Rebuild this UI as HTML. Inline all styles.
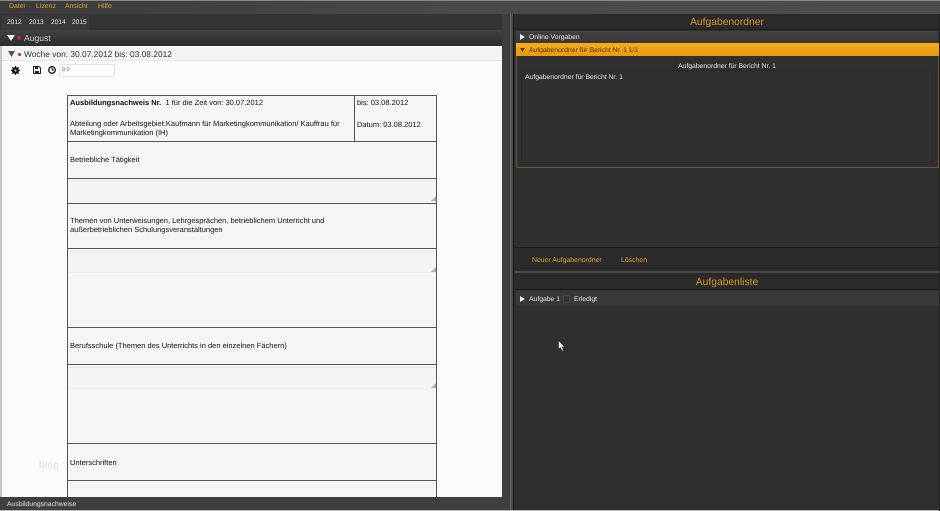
<!DOCTYPE html>
<html><head><meta charset="utf-8">
<style>
html,body{margin:0;padding:0;background:#2e2e2e;}
#p{position:relative;width:940px;height:511px;overflow:hidden;background:#2e2e2e;font-family:"Liberation Sans",sans-serif;font-size:7.5px;color:#111;text-rendering:geometricPrecision;filter:blur(.3px);}
#p div{position:absolute;box-sizing:border-box;}
.t{white-space:nowrap;line-height:11px;}
.o{color:#e0a030;font-size:6.9px;}
.w{color:#e2e2e2;font-size:6.8px;}
.h{height:1px;background:#555;left:67px;width:370px;}
.ta{left:69px;width:366px;background:#f4f4f4;border-top:1px solid #e8e8e8;border-bottom:1px solid #ececec;}
</style></head><body>
<div id="p">
<div style="left:0;top:0;width:940px;height:14px;background:linear-gradient(90deg,#3a3a3a,#4a4a4a 50%,#4c4c4c)"></div>
<div style="left:0;top:0;width:940px;height:1px;background:#888"></div>
<div class="t o" style="left:9px;top:.5px;">Datei</div>
<div class="t o" style="left:36px;top:.5px;">Lizenz</div>
<div class="t o" style="left:65px;top:.5px;">Ansicht</div>
<div class="t o" style="left:98px;top:.5px;">Hilfe</div>

<div style="left:0;top:14px;width:503px;height:16px;background:#343434"></div>
<div style="left:2px;top:15px;width:87px;height:15px;background:#3a3a3a"></div>
<div class="t w" style="left:7px;top:17px;font-size:6.6px;">2012</div>
<div class="t w" style="left:29px;top:17px;font-size:6.6px;">2013</div>
<div class="t w" style="left:51px;top:17px;font-size:6.6px;">2014</div>
<div class="t w" style="left:72px;top:17px;font-size:6.6px;">2015</div>

<div style="left:0;top:30px;width:503px;height:16px;background:linear-gradient(#424242,#2b2b2b)"></div>
<svg style="position:absolute;left:7px;top:35px" width="8" height="7"><path d="M0 0H8L4 6Z" fill="#eee"/></svg>
<div style="left:17px;top:36px;width:4px;height:4px;border-radius:50%;background:#c0282c"></div>
<div class="t" style="left:24px;top:33px;color:#ccc;font-size:8.6px;">August</div>

<div style="left:0;top:46px;width:2px;height:451px;background:#c8c8c8"></div>
<div style="left:2px;top:46px;width:500px;height:451px;background:#fbfbfb"></div>
<div style="left:2px;top:47px;width:500px;height:14px;background:#f3f3f3;border-bottom:1px solid #e6e6e6"></div>
<svg style="position:absolute;left:8px;top:51px" width="7" height="6"><path d="M0 0H7L3.5 6Z" fill="#555"/></svg>
<div style="left:18px;top:53px;width:3px;height:3px;border-radius:50%;background:#b02a30"></div>
<div class="t" style="left:24px;top:49px;font-size:8.4px;color:#333;">Woche von: 30.07.2012 bis: 03.08.2012</div>

<svg style="position:absolute;left:11px;top:66px" width="9" height="9" viewBox="0 0 9 9"><circle cx="4.5" cy="4.5" r="2.4" fill="none" stroke="#111" stroke-width="2"/><path d="M4.5 0V9M0 4.5H9M1.3 1.3L7.7 7.7M7.7 1.3L1.3 7.7" stroke="#111" stroke-width="1.2"/><circle cx="4.5" cy="4.5" r="1" fill="#fff"/></svg>
<svg style="position:absolute;left:33px;top:66px" width="8" height="8" viewBox="0 0 8 8"><path d="M.5.5H6L7.5 2V7.5H.5Z" fill="none" stroke="#222"/><path d="M2 1H5V3H2ZM2 5H6V7H2Z" fill="#222"/></svg>
<svg style="position:absolute;left:48px;top:66px" width="8" height="8" viewBox="0 0 8 8"><circle cx="4" cy="4" r="3.3" fill="none" stroke="#111" stroke-width="1.3"/><path d="M4 2V4H6" fill="none" stroke="#111" stroke-width=".9"/></svg>
<div style="left:59px;top:64px;width:56px;height:13px;border:1px solid #e4e4e4;border-radius:2px;background:#fbfbfb"></div>
<div class="t" style="left:62px;top:65px;font-size:5.5px;color:#777;">0.0</div>

<!-- form -->
<div style="left:67px;top:95px;width:370px;height:402px;background:#f5f5f5;border-left:1px solid #555;border-right:1px solid #555;"></div>
<div class="ta" style="top:180px;height:23px;border-bottom:none"></div>
<div class="ta" style="top:251px;height:22px;"></div>
<div class="ta" style="top:367px;height:22px;"></div>
<div class="h" style="top:95px"></div>
<div class="h" style="top:141px"></div>
<div class="h" style="top:178px"></div>
<div class="h" style="top:203px"></div>
<div class="h" style="top:248px"></div>
<div class="h" style="top:327px"></div>
<div class="h" style="top:364px"></div>
<div class="h" style="top:443px"></div>
<div class="h" style="top:480px"></div>
<div style="left:354px;top:95px;width:1px;height:46px;background:#555"></div>

<div class="t" style="left:70px;top:96.5px;"><b>Ausbildungsnachweis Nr.</b>&nbsp; 1 für die Zeit von: 30.07.2012</div>
<div class="t" style="left:357px;top:96.5px;">bis: 03.08.2012</div>
<div class="t" style="left:70px;top:120px;line-height:8.5px;">Abteilung oder Arbeitsgebiet:Kaufmann für Marketingkommunikation/ Kauffrau für<br>Marketingkommunikation (IH)</div>
<div class="t" style="left:357px;top:119px;">Datum: 03.08.2012</div>
<div class="t" style="left:70px;top:154px;">Betriebliche Tätigkeit</div>
<div class="t" style="left:70px;top:217px;line-height:8.5px;">Themen von Unterweisungen, Lehrgesprächen, betrieblichem Unterricht und<br>außerbetrieblichen Schulungsveranstaltungen</div>
<div class="t" style="left:70px;top:340px;">Berufsschule (Themen des Unterrichts in den einzelnen Fächern)</div>
<div class="t" style="left:70px;top:457px;">Unterschriften</div>

<svg style="position:absolute;left:431px;top:196px" width="5" height="5"><path d="M5 0V5H0Z" fill="#b0b0b0"/></svg>
<svg style="position:absolute;left:431px;top:267px" width="5" height="5"><path d="M5 0V5H0Z" fill="#b0b0b0"/></svg>
<svg style="position:absolute;left:431px;top:383px" width="5" height="5"><path d="M5 0V5H0Z" fill="#b0b0b0"/></svg>

<div class="t" style="left:39px;top:460px;font-size:10px;color:#dedede;letter-spacing:.3px;">blog</div>

<!-- bottom bar -->
<div style="left:0;top:497px;width:510px;height:14px;background:#3f3f3f"></div>
<div class="t w" style="left:7px;top:499px;">Ausbildungsnachweise</div>

<!-- splitter -->
<div style="left:502px;top:14px;width:11px;height:483px;background:#3d3d3d"></div>
<div style="left:510px;top:14px;width:4px;height:497px;background:#4a4a4a;border-left:1px solid #666;border-right:1px solid #141414"></div>

<!-- right panel -->
<div style="left:514px;top:14px;width:426px;height:497px;background:#2f2f2f"></div>
<div style="left:515px;top:14px;width:425px;height:16px;background:#2a2a2a;border-bottom:1px solid #1d1d1d"></div>
<div class="t" style="left:515px;top:16px;width:424px;text-align:center;font-size:10.3px;line-height:12px;color:#d8962a;transform:translateY(1px)">Aufgabenordner</div>

<div style="left:516px;top:31px;width:422px;height:12px;background:linear-gradient(#414141,#383838)"></div>
<svg style="position:absolute;left:520px;top:34px" width="5" height="6"><path d="M0 0L5 3L0 6Z" fill="#eee"/></svg>
<div class="t w" style="left:529px;top:31.5px;">Online Vorgaben</div>

<div style="left:516px;top:43px;width:423px;height:13px;background:linear-gradient(#f5ab1c,#ea9a0c)"></div>
<svg style="position:absolute;left:520px;top:48px" width="5" height="4"><path d="M0 0H5L2.5 4Z" fill="#5a3a08"/></svg>
<div class="t" style="left:529px;top:44.5px;color:#4c3208;font-size:6.8px;">Aufgabenordner für Bericht Nr. 1 1/1</div>

<div style="left:516px;top:56px;width:423px;height:112px;border:1px solid #6d5535;border-top:none;background:#2f2f2f"></div>
<div class="t w" style="left:516px;top:61px;width:422px;text-align:center;">Aufgabenordner für Bericht Nr. 1</div>
<div style="left:521px;top:70px;width:412px;height:93px;border:1px solid #292929;background:#303030"></div>
<div class="t w" style="left:525px;top:71.5px;">Aufgabenordner für Bericht Nr. 1</div>

<div style="left:515px;top:247px;width:425px;height:1px;background:#1a1a1a"></div>
<div style="left:515px;top:248px;width:425px;height:23px;background:#2a2a2a"></div>
<div class="t o" style="left:532px;top:255px;">Neuer Aufgabenordner</div>
<div class="t o" style="left:621px;top:255px;">Löschen</div>
<div style="left:515px;top:271px;width:425px;height:2px;background:#4a4a4a"></div>
<div style="left:515px;top:273px;width:425px;height:17px;background:#2a2a2a;border-bottom:1px solid #1c1c1c"></div>
<div class="t" style="left:515px;top:277px;width:424px;text-align:center;font-size:10.3px;line-height:12px;color:#d8962a;">Aufgabenliste</div>

<div style="left:516px;top:291px;width:423px;height:15px;background:#383838"></div>
<svg style="position:absolute;left:520px;top:296px" width="5" height="6"><path d="M0 0L5 3L0 6Z" fill="#eee"/></svg>
<div class="t w" style="left:529px;top:293.5px;">Aufgabe 1</div>
<div style="left:563px;top:295px;width:7px;height:8px;background:#333;border:1px solid #444"></div>
<div class="t w" style="left:574px;top:293.5px;">Erledigt</div>

<svg style="position:absolute;left:558px;top:340px" width="7" height="12"><path d="M.5 .5V9L2.5 7.5L4 11L5.5 10.3L4 7H6.5Z" fill="#eee" stroke="#222" stroke-width=".5"/></svg>

<div style="left:0;top:510px;width:940px;height:1px;background:#bbb"></div>
<div style="left:939px;top:14px;width:1px;height:497px;background:#222"></div>
</div>
</body></html>
